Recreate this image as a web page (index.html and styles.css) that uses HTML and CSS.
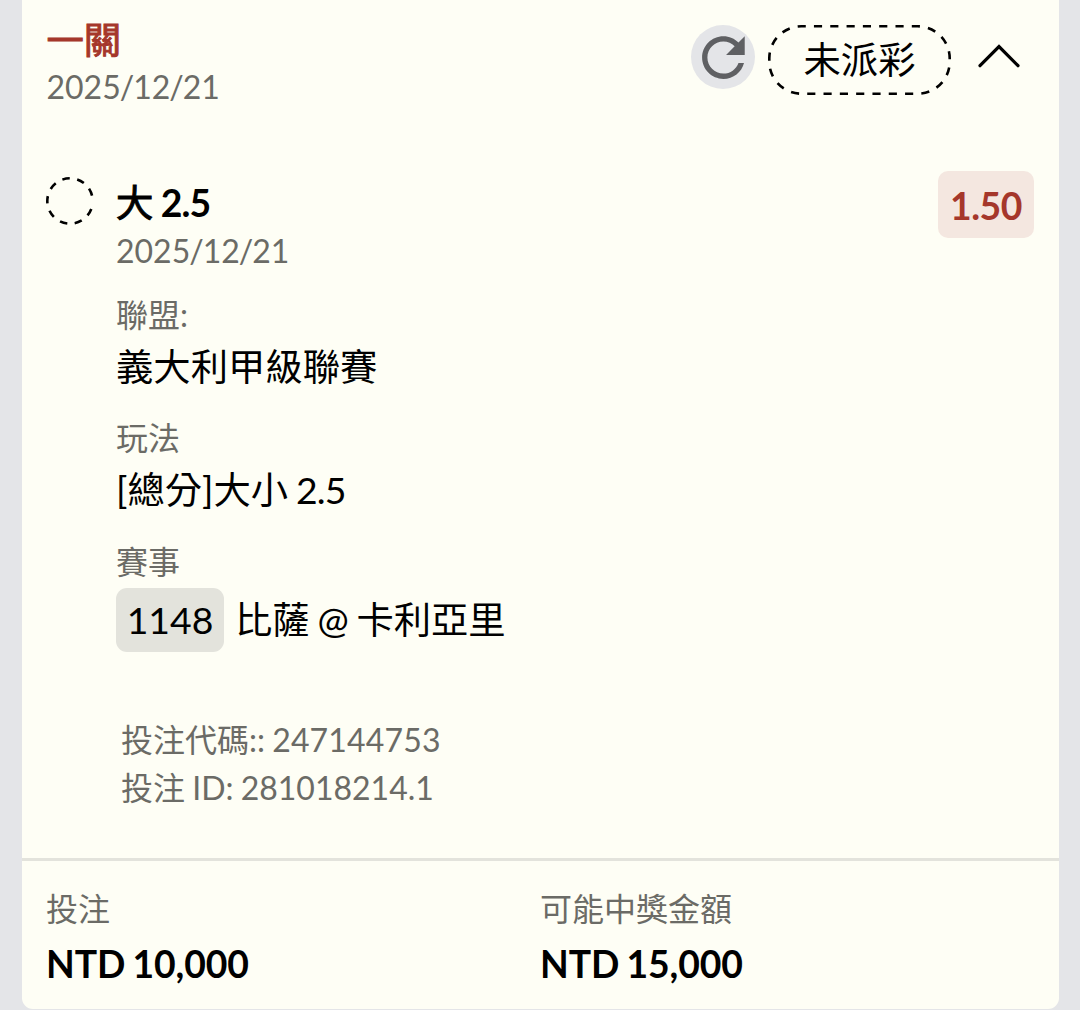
FILE: index.html
```html
<!DOCTYPE html>
<html lang="zh-Hant">
<head>
<meta charset="utf-8">
<title>注單</title>
<link rel="stylesheet" href="styles.css">
</head>
<body>
<article class="slip">
  <header class="slip-head">
    <div class="heading">
      <h1 class="title title-red"><span class="han">一關</span></h1>
      <p class="meta">2025<span class="slash">/</span>12<span class="slash">/</span>21</p>
    </div>
    <div class="actions">
      <button class="refresh" aria-label="重新整理">
        <svg viewBox="0 0 24 24"><path d="M17.65 6.35C16.2 4.9 14.21 4 12 4c-4.42 0-7.99 3.58-7.99 8s3.57 8 7.99 8c3.73 0 6.84-2.55 7.73-6h-2.08c-.82 2.33-3.04 4-5.65 4-3.31 0-6-2.69-6-6s2.69-6 6-6c1.66 0 3.14.69 4.22 1.78L13 11h7V4l-2.35 2.35z"/></svg>
      </button>
      <div class="status">
        <svg class="status-frame" viewBox="0 0 183 70"><rect x="1.3" y="1.3" width="180.4" height="67.4" rx="32" pathLength="432"/></svg>
        <span class="status-text">未派彩</span>
      </div>
      <svg class="chevron" viewBox="0 0 44 28"><path d="M3 23.7 22 4.5 41 23.7"/></svg>
    </div>
  </header>

  <section class="bet">
    <svg class="pending" viewBox="0 0 48 48"><circle cx="24" cy="24" r="22.7" pathLength="360"/></svg>
    <div class="detail">
      <h2 class="title"><span class="han">大</span> <span class="num">2.5</span></h2>
      <p class="meta">2025<span class="slash">/</span>12<span class="slash">/</span>21</p>
      <dl class="fields">
        <div class="field"><dt class="meta">聯盟:</dt><dd class="value">義大利甲級聯賽</dd></div>
        <div class="field"><dt class="meta">玩法</dt><dd class="value">[總分]大小 <span class="num">2.5</span></dd></div>
        <div class="field field-match"><dt class="meta">賽事</dt><dd class="value match"><span class="code">1148</span><span>比薩 @ 卡利亞里</span></dd></div>
      </dl>
      <div class="ids">
        <p class="meta">投注代碼:: <span class="serial">247144753</span></p>
        <p class="meta">投注 ID: 281018214.1</p>
      </div>
    </div>
    <span class="odds">1.50</span>
  </section>

  <footer class="totals">
    <div class="total"><p class="meta">投注</p><p class="title amount">NTD 10,000</p></div>
    <div class="total"><p class="meta">可能中獎金額</p><p class="title amount">NTD 15,000</p></div>
  </footer>
</article>
</body>
</html>
```

FILE: styles.css
```css
* { box-sizing: border-box; margin: 0; padding: 0; }

body {
  height: 1010px;
  overflow: hidden;
  background: #e4e5e8;
  color: #000;
  font-family: Lato, "Noto Sans CJK TC", sans-serif;
}

.slip {
  display: flex;
  flex-direction: column;
  width: 1037px;
  height: 1009px;
  margin-left: 21.5px;
  background: #fefef5;
  border-radius: 0 0 11px 11px;
}

.title { font-size: 37.33px; line-height: 48px; font-weight: 700; white-space: nowrap; word-spacing: -1.8px; }
.title-red { color: #a5372b; }
.meta { font-size: 32px; line-height: 48px; color: #6b6b66; white-space: nowrap; word-spacing: -1px; }
.value { font-size: 37.33px; line-height: 48px; white-space: nowrap; word-spacing: -1.8px; }

/* Han glyphs in titles are semi-bold: regular outlines with a thin stroke */
.han { font-weight: 400; -webkit-text-stroke: 1px currentColor; }
.num { letter-spacing: -0.8px; }
.slash { margin: 0 -1px; }
.amount { letter-spacing: -0.1px; }
.serial { letter-spacing: 0.15px; }

.slip-head {
  display: flex;
  justify-content: space-between;
  height: 171px;
  padding: 16px 38px 0 25px;
}
.slip-head .meta { margin-top: -1.5px; }

.actions { display: flex; align-items: flex-start; padding-top: 9.3px; }

.refresh {
  width: 64px;
  height: 64px;
  margin-right: 13px;
  border: 0;
  border-radius: 50%;
  background: #e4e5e8;
}
.refresh svg { display: block; width: 64px; height: 64px; fill: #5f6063; transform: translate(0.4px, 0.6px); }

.status { display: grid; width: 183px; height: 70px; margin-right: 26px; }
.status > * { grid-area: 1 / 1; }
.status-frame { width: 183px; height: 70px; }
.status-frame rect {
  fill: none;
  stroke: #000;
  stroke-width: 2.6;
  stroke-dasharray: 8 8;
  stroke-dashoffset: 3.6;
}
.status-text { padding-left: 1px; font-size: 37.33px; line-height: 70px; text-align: center; }

.chevron { width: 44px; height: 28px; margin-top: 16.8px; fill: none; stroke: #000; stroke-width: 3.2; stroke-linecap: round; }

.bet {
  display: flex;
  align-items: flex-start;
  height: 687px;
  padding: 0 24.5px 0 24px;
}

.pending { width: 48px; height: 48px; margin-top: 5.5px; fill: none; stroke: #000; stroke-width: 2.6; }
/* nine dashes, with the wider gap where the outline closes */
.pending circle { stroke-dasharray: 0 20.5 19 19.3 19 19.3 19 19.3 19 19.3 19 19.3 19 19.3 19 19.3 19 19.3 19 40; }

.detail { flex: 1; padding: 8px 0 0 22.5px; }

.fields { display: grid; gap: 24px; padding-top: 15.5px; }
.field { display: grid; gap: 4px; }
.field:not(.field-match) { height: 99.5px; }
.field-match { gap: 2px; }
.match { display: flex; gap: 11px; line-height: 64.5px; }
.code { padding: 0 10.7px; border-radius: 11px; background: #e3e3dc; }

.ids { padding: 64px 0 0 5px; }

.odds {
  width: 96px;
  height: 67px;
  border-radius: 10px;
  background: #f4e7e0;
  color: #a5372b;
  font-size: 37.33px;
  font-weight: 700;
  letter-spacing: -0.5px;
  line-height: 69px;
  text-align: center;
}

.totals {
  display: grid;
  grid-template-columns: 494px 1fr;
  padding: 24px 25px 0 24.5px;
  border-top: 3px solid #e3e3dc;
}
.total { display: grid; align-content: start; gap: 6.5px; }
```
